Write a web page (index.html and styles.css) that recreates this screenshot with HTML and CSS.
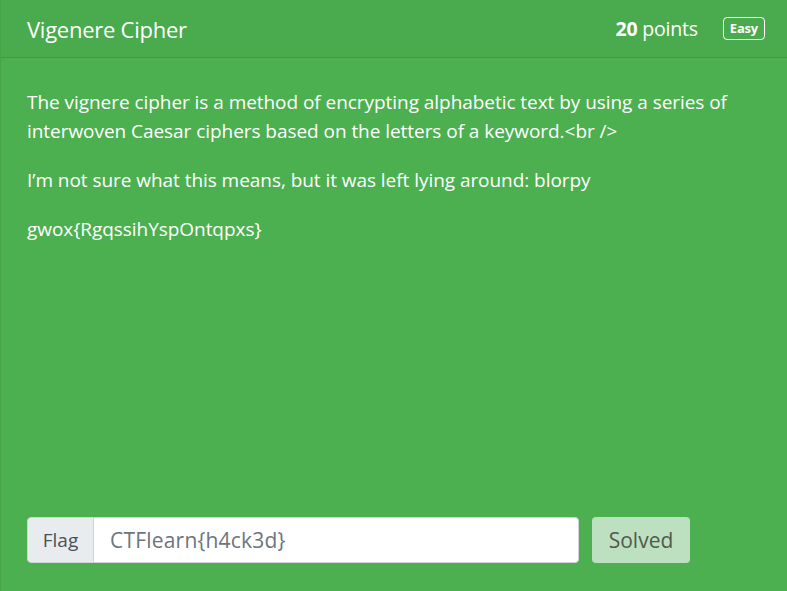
FILE: index.html
```html
<!DOCTYPE html>
<html>
<head>
<meta charset="utf-8">
<link rel="stylesheet" href="styles.css">
</head>
<body>
<div class="card">
  <div class="card-header">
    <div class="title">Vigenere Cipher</div>
    <div class="meta">
      <span class="points"><b>20</b> points</span>
      <span class="badge">Easy</span>
    </div>
  </div>
  <div class="card-body">
    <div class="desc">
      <p>The vignere cipher is a method of encrypting alphabetic text by using a series of interwoven Caesar ciphers based on the letters of a keyword.&lt;br /&gt;</p>
      <p>I’m not sure what this means, but it was left lying around: blorpy</p>
      <p>gwox{RgqssihYspOntqpxs}</p>
    </div>
    <div class="flag-row">
      <div class="input-group">
        <span class="addon">Flag</span>
        <span class="input">CTFlearn{h4ck3d}</span>
      </div>
      <span class="btn">Solved</span>
    </div>
  </div>
</div>
</body>
</html>
```
FILE: styles.css
```css
html, body { margin: 0; padding: 0; }
body {
  width: 787px; height: 591px; overflow: hidden;
  background: #4caf50;
  font-family: "Open Sans", sans-serif;
  color: #fff;
}
.card {
  height: 591px;
  display: flex; flex-direction: column;
  background: #4caf50;
  border-left: 1px solid #46a34a;
  box-sizing: border-box;
}
.card-header {
  height: 58px; box-sizing: border-box;
  display: flex; align-items: center; justify-content: space-between;
  padding: 0 22px 0 26px;
  background: #4aaa4e;
  border-bottom: 1px solid #41984a;
}
.title { font-size: 22px; letter-spacing: -0.25px; }
.meta { display: flex; align-items: center; gap: 25px; }
.points { font-size: 19.5px; letter-spacing: -0.2px; }
.points b { font-weight: 700; }
.badge {
  font-size: 13px; font-weight: 700;
  border: 1px solid #fff; border-radius: 4px;
  padding: 1px 6px 2px;
  letter-spacing: -0.2px;
}
.card-body {
  flex: 1; display: flex; flex-direction: column; justify-content: space-between;
  padding: 30px 26px 28px 26px;
}
.desc p {
  margin: 0 0 20px 0;
  font-size: 19px; line-height: 29px;
  letter-spacing: -0.05px;
}
.flag-row { display: flex; gap: 13px; align-items: stretch; }
.input-group {
  width: 552px; height: 46px; box-sizing: border-box;
  display: flex;
  border-radius: 4px; overflow: hidden;
}
.addon {
  width: 67px; box-sizing: border-box;
  background: #e9ecef; color: #495057;
  border: 1px solid #ced4da; border-radius: 4px 0 0 4px;
  display: flex; align-items: center; justify-content: center;
  font-size: 19px;
}
.input {
  flex: 1; background: #fff; color: #6c757d;
  border: 1px solid #ced4da; border-left: none; border-radius: 0 4px 4px 0;
  display: flex; align-items: center; padding-left: 16px;
  font-size: 21px; letter-spacing: 0.2px;
}
.btn {
  width: 98px; height: 46px; box-sizing: border-box;
  background: #bde0c0; color: #4e5b50;
  border-radius: 4px;
  display: flex; align-items: center; justify-content: center;
  font-size: 21px;
}
```
